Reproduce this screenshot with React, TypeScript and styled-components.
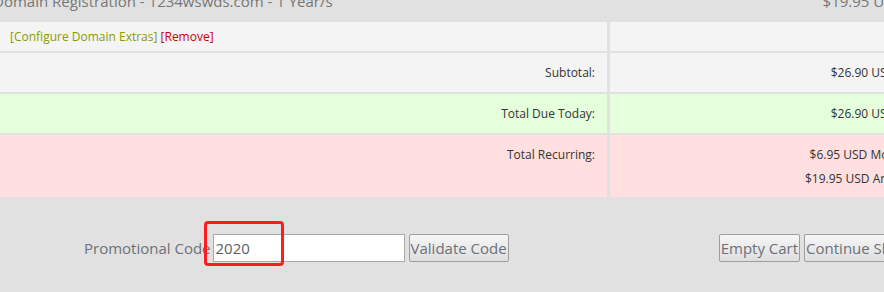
import React from "react";
import styled, { createGlobalStyle } from "styled-components";

const GlobalStyle = createGlobalStyle`
  html, body {
    margin: 0;
    padding: 0;
    background: #e1e1e1;
    overflow: hidden;
  }
  body {
    font-family: "Open Sans", "DejaVu Sans", sans-serif;
  }
`;

const tones = {
  head: "#e1e1e1",
  plain: "#f4f4f4",
  green: "#e5ffdc",
  pink: "#ffdfdf",
};

const Cart = styled.div`
  display: grid;
  grid-template-columns: 607px 508px;
  column-gap: 3px;
  row-gap: 2px;
  width: 1118px;
  margin-top: -10px;
  background: #e1e1e1;
`;

const Cell = styled.div<{
  $tone: keyof typeof tones;
  $align: "left" | "right" | "center";
  $height: number;
}>`
  box-sizing: border-box;
  height: ${({ $height }) => $height}px;
  background: ${({ $tone }) => tones[$tone]};
  display: flex;
  flex-direction: column;
  justify-content: center;
  align-items: ${({ $align }) =>
    $align === "left" ? "flex-start" : $align === "right" ? "flex-end" : "center"};
  padding: 0 12px 0 10px;
  font-size: 12px;
  line-height: 24px;
  color: #333;
  white-space: nowrap;
`;

const HeadCell = styled(Cell)`
  justify-content: flex-start;
  padding-top: 1px;
  font-size: 15px;
  line-height: 20px;
  color: #777;
`;

const RecurringCell = styled(Cell)`
  justify-content: flex-start;
  padding-top: 8px;
`;

const Title = styled.span`
  margin-left: -17px;
`;

const Link = styled.a<{ $danger?: boolean }>`
  color: ${({ $danger }) => ($danger ? "#cc0000" : "#8d9a00")};
  text-decoration: none;
`;

const Footer = styled.div`
  position: relative;
  display: flex;
  align-items: center;
  padding: 37px 0 30px 84px;
  width: 1034px;
  font-size: 15px;
  color: #6b717a;
`;

const PromoForm = styled.form`
  display: flex;
  align-items: center;
  margin: 0;
`;

const PromoLabel = styled.label`
  margin-right: 2px;
  line-height: 28px;
`;

const PromoInput = styled.input`
  box-sizing: border-box;
  width: 192px;
  height: 28px;
  padding: 0 2px;
  border: 1px solid #a9a9a9;
  background: #fff;
  font-family: inherit;
  font-size: 15px;
  color: #5a5f66;
  outline: none;
`;

const Button = styled.button`
  box-sizing: border-box;
  height: 28px;
  padding: 0 1px;
  margin-left: 4px;
  border: 1px solid #9e9e9e;
  border-radius: 2px;
  background: linear-gradient(#f6f6f6, #dedede);
  font-family: inherit;
  font-size: 15px;
  color: #6b717a;
  white-space: nowrap;
`;

const CartActions = styled.div`
  display: flex;
  align-items: center;
  margin-left: 206px;
`;

const Highlight = styled.div`
  position: absolute;
  left: 204px;
  top: 24px;
  width: 80px;
  height: 45px;
  box-sizing: border-box;
  border: 3px solid #ff1c1c;
  border-radius: 4px;
  pointer-events: none;
`;

export default function App() {
  return (
    <>
      <GlobalStyle />
      <Cart>
        <HeadCell $tone="head" $align="left" $height={30}>
          <Title>Domain Registration - 1234wswds.com - 1 Year/s</Title>
        </HeadCell>
        <HeadCell $tone="head" $align="center" $height={30}>
          $19.95 USD
        </HeadCell>

        <Cell $tone="plain" $align="left" $height={29}>
          <span>
            <Link href="#">[Configure Domain Extras]</Link>{" "}
            <Link href="#" $danger>
              [Remove]
            </Link>
          </span>
        </Cell>
        <Cell $tone="plain" $align="center" $height={29} />

        <Cell $tone="plain" $align="right" $height={39}>
          Subtotal:
        </Cell>
        <Cell $tone="plain" $align="center" $height={39}>
          $26.90 USD
        </Cell>

        <Cell $tone="green" $align="right" $height={39}>
          Total Due Today:
        </Cell>
        <Cell $tone="green" $align="center" $height={39}>
          $26.90 USD
        </Cell>

        <RecurringCell $tone="pink" $align="right" $height={62}>
          Total Recurring:
        </RecurringCell>
        <RecurringCell $tone="pink" $align="center" $height={62}>
          <span>$6.95 USD Monthly</span>
          <span>$19.95 USD Annually</span>
        </RecurringCell>
      </Cart>

      <Footer>
        <PromoForm onSubmit={(e) => e.preventDefault()}>
          <PromoLabel>Promotional Code</PromoLabel>
          <PromoInput defaultValue="2020" />
          <Button type="submit">Validate Code</Button>
        </PromoForm>
        <CartActions>
          <Button type="button">Empty Cart</Button>
          <Button type="button">Continue Shopping</Button>
        </CartActions>
        <Highlight />
      </Footer>
    </>
  );
}
